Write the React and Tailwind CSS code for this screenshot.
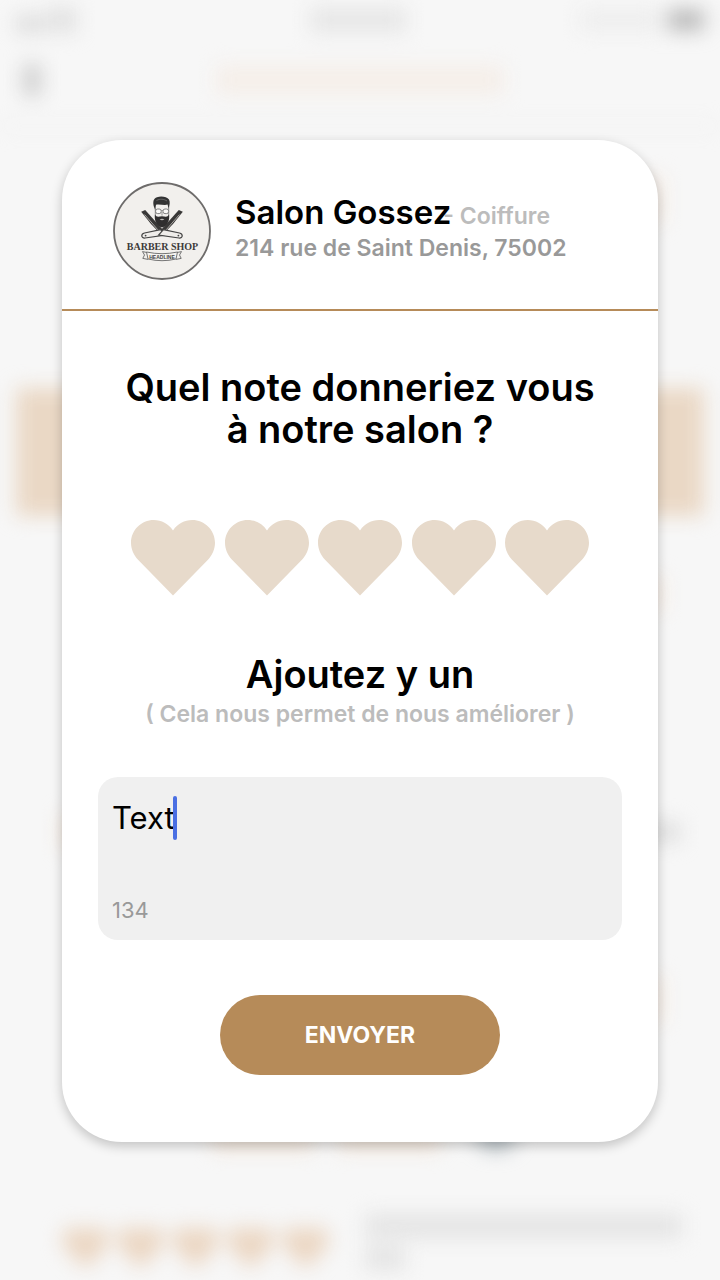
import { useState } from 'react';

function ShopLogo() {
  return (
    <svg viewBox="0 0 98 98" className="size-[98px] shrink-0" role="img" aria-label="Barber Shop">
      <circle cx="49" cy="49" r="48" fill="#f2f0ed" stroke="#6e6c6b" strokeWidth="1.8" />
      {/* hair */}
      <path d="M41 25 C39.5 20 40.5 16 44 15.2 C48 13.6 54 14.6 56 17.5 C57.4 20 56.6 23 55.6 27 L54.6 22.6 C51 23.6 46 21.8 43 22.8 L42.2 28 Z" fill="#333" />
      <path d="M43.5 18.5 C47 16.5 51 17 54 19" fill="none" stroke="#8a8886" strokeWidth="0.6" />
      {/* face and glasses */}
      <path d="M42.3 25 V34 M55.7 25 V34" stroke="#777" strokeWidth="0.8" />
      <rect x="42.6" y="27" width="5.6" height="4.6" rx="2" fill="#fbfaf8" stroke="#666" strokeWidth="0.8" />
      <rect x="50" y="27" width="5.6" height="4.6" rx="2" fill="#fbfaf8" stroke="#666" strokeWidth="0.8" />
      <path d="M48.2 28.6 H50 M49 30 V33.6" stroke="#777" strokeWidth="0.7" />
      {/* razors */}
      <path d="M28.2 29.8 L32.2 28 L51 49 L47.6 52 L38 42 Z" fill="#393837" />
      <path d="M69.8 29.8 L65.8 28 L47 49 L50.4 52 L60 42 Z" fill="#393837" />
      <path d="M31.6 32.6 L45 48 M66.4 32.6 L53 48" stroke="#b5b2af" strokeWidth="0.9" />
      {/* beard */}
      <path d="M42 32.5 C43.5 35.5 45.5 34.6 49 34.2 C52.5 34.6 54.5 35.5 56 32.5 C57 38 54.8 43.5 49 45.6 C43.2 43.5 41 38 42 32.5 Z" fill="#2f2e2e" />
      <path d="M46.6 37.4 Q49 36.2 51.4 37.4 Q49 39 46.6 37.4 Z" fill="#bdbab7" />
      {/* handles */}
      <path d="M47.6 47.6 L31.5 51 C27.6 52 28 56.4 32 56 L52.4 53 Z" fill="#efedea" stroke="#444" strokeWidth="1.2" />
      <path d="M50.4 47.6 L66.5 51 C70.4 52 70 56.4 66 56 L45.6 53 Z" fill="#efedea" stroke="#444" strokeWidth="1.2" />
      <circle cx="32.6" cy="53.6" r="0.9" fill="#444" />
      <circle cx="65.4" cy="53.6" r="0.9" fill="#444" />
      <text x="49.5" y="67.5" textAnchor="middle" fill="#3d3b3a" className="font-['Liberation_Serif',serif] text-[10px] font-bold">
        BARBER SHOP
      </text>
      {/* ribbon */}
      <path d="M34 70.5 L29.5 69.6 L31.5 73 L29.8 76.4 L35 77.4 M64 70.5 L68.5 69.6 L66.5 73 L68.2 76.4 L63 77.4" fill="none" stroke="#666" strokeWidth="0.9" />
      <path d="M33.5 70 Q49 73.4 64.5 70 L63 77 Q49 80.4 35 77 Z" fill="#f5f3f0" stroke="#666" strokeWidth="0.9" />
      <text x="49" y="77" textAnchor="middle" fill="#444" className="font-['Liberation_Sans',sans-serif] text-[5px] font-bold">
        HEADLINE
      </text>
    </svg>
  );
}

function Heart({ className }) {
  return (
    <svg viewBox="0 0 84 76" className={className} fill="currentColor" aria-hidden="true">
      <path d="M42 75.6 L6.8 39.4 C2.6 35 0 29 0 22.8 C0 10.2 10.2 0 22.8 0 C30.5 0 37.5 3.8 42 10.4 C46.5 3.8 53.5 0 61.2 0 C73.8 0 84 10.2 84 22.8 C84 29 81.4 35 77.2 39.4 Z" />
    </svg>
  );
}

function Backdrop() {
  return (
    <div aria-hidden="true" className="absolute inset-0 overflow-hidden bg-[#f7f7f7]">
      <div className="flex h-full flex-col blur-[10px]">
        <div className="flex items-center justify-between px-4 pt-2">
          <div className="flex w-15 items-end gap-1">
            <div className="h-4 w-7 bg-[#d9d9d9]" />
            <div className="h-6 w-7 bg-[#e0e0e0]" />
          </div>
          <div className="ml-15 h-6 w-24 bg-[#e6e6e6]" />
          <div className="flex items-center gap-2">
            <div className="h-5 w-20 bg-[#ededed]" />
            <div className="h-5 w-9 bg-[#b5b5b5]" />
          </div>
        </div>
        <div className="mt-8 flex items-center justify-between px-6">
          <div className="h-8 w-4 bg-[#c9c9c9]" />
          <div className="h-7 w-[288px] bg-[#f5eee8]" />
          <div className="w-4" />
        </div>
        <div className="mt-7 h-1 bg-[#f0f0f0]" />
        <div className="mt-12 mr-14 h-12 w-10 self-end bg-[#f5ece4]" />
        <div className="mx-4 mt-[164px] h-[128px] bg-[#ead8c5]" />
        <div className="mt-15 mr-14 h-9 w-10 self-end bg-[#f5ece4]" />
        <div className="mt-[202px] flex items-center justify-between px-10">
          <div className="ml-5 h-9 w-10 bg-[#f3e8de]" />
          <div className="h-5 w-14 bg-[#dedede]" />
        </div>
        <div className="mt-[126px] mr-14 h-12 w-10 self-end bg-[#f5ece4]" />
        <div className="mt-[90px] flex items-end gap-6 pl-[212px]">
          <div className="h-7 w-[102px] bg-[#f3e6da]" />
          <div className="h-7 w-[102px] bg-[#f3e6da]" />
          <div className="ml-3 h-9 w-10 rounded-full bg-[#b3bdc2]" />
        </div>
        <div className="mt-16 flex gap-9 px-[62px]">
          <div className="flex gap-2 pt-3 text-[#ebd6c2]">
            {[1, 2, 3, 4, 5].map((n) => (
              <Heart key={n} className="w-[47px]" />
            ))}
          </div>
          <div className="-mr-6 flex flex-1 flex-col gap-2">
            <div className="h-6 bg-[#e4e4e4]" />
            <div className="h-6 w-10 bg-[#e4e4e4]" />
          </div>
        </div>
      </div>
    </div>
  );
}

export default function App() {
  const [text, setText] = useState('Text');
  const [rating, setRating] = useState(0);

  return (
    <div className="relative min-h-screen overflow-hidden font-['Inter',sans-serif] text-black">
      <Backdrop />
      <main className="relative px-[62px] pt-[140px] pb-[138px]">
        <section className="rounded-[60px] bg-white pb-[67px] shadow-[0_4px_12px_rgba(0,0,0,0.22)]">
          <header className="flex gap-6 border-b-2 border-[#b68b59] px-[51px] pt-[42px] pb-[29px]">
            <ShopLogo />
            <div className="pt-[10px] whitespace-nowrap">
              <div className="flex items-baseline">
                <h1 className="relative text-[33px] leading-10 font-semibold">Salon Gossez</h1>
                <span className="-ml-2 text-[23px] leading-8 font-semibold text-[#bcbcbc]">- Coiffure</span>
              </div>
              <p className="text-[23px] leading-8 font-semibold text-[#999]">214 rue de Saint Denis, 75002</p>
            </div>
          </header>
          <form className="flex flex-col items-center px-9 pt-[55px]" onSubmit={(e) => e.preventDefault()}>
            <h2 className="text-center text-[38px] leading-[42px] font-semibold">
              Quel note donneriez vous
              <br />à notre salon ?
            </h2>
            <div className="mt-[70px] flex w-[458px] max-w-full justify-between">
              {[1, 2, 3, 4, 5].map((n) => (
                <button
                  key={n}
                  type="button"
                  aria-label={`Note ${n} sur 5`}
                  onClick={() => setRating(n)}
                  className={n <= rating ? 'text-[#b68b59]' : 'text-[#e7dacb]'}
                >
                  <Heart className="w-[84px]" />
                </button>
              ))}
            </div>
            <label htmlFor="comment" className="mt-[54px] text-center text-[38px] leading-12 font-semibold">
              Ajoutez y un
            </label>
            <p className="text-center text-[23px] leading-8 font-semibold text-[#bcbcbc]">
              ( Cela nous permet de nous améliorer )
            </p>
            <div className="relative mt-[47px] flex h-[163px] w-full flex-col rounded-[20px] bg-[#f0f0f0] px-[14px] pt-[21px] pb-4">
              <textarea
                id="comment"
                value={text}
                onChange={(e) => setText(e.target.value)}
                className="min-h-0 w-full flex-1 resize-none bg-transparent text-[31px] leading-10 caret-[#4a6fe3] outline-none"
              />
              <span className="text-[22px] leading-7 text-[#999]">134</span>
              <span aria-hidden="true" className="absolute top-[19px] left-[75px] h-11 w-1 rounded-full bg-[#4a6fe3]" />
            </div>
            <button type="submit" className="mt-[55px] h-20 w-[280px] rounded-full bg-[#b68b59] text-[23px] font-bold text-white">
              ENVOYER
            </button>
          </form>
        </section>
      </main>
    </div>
  );
}
